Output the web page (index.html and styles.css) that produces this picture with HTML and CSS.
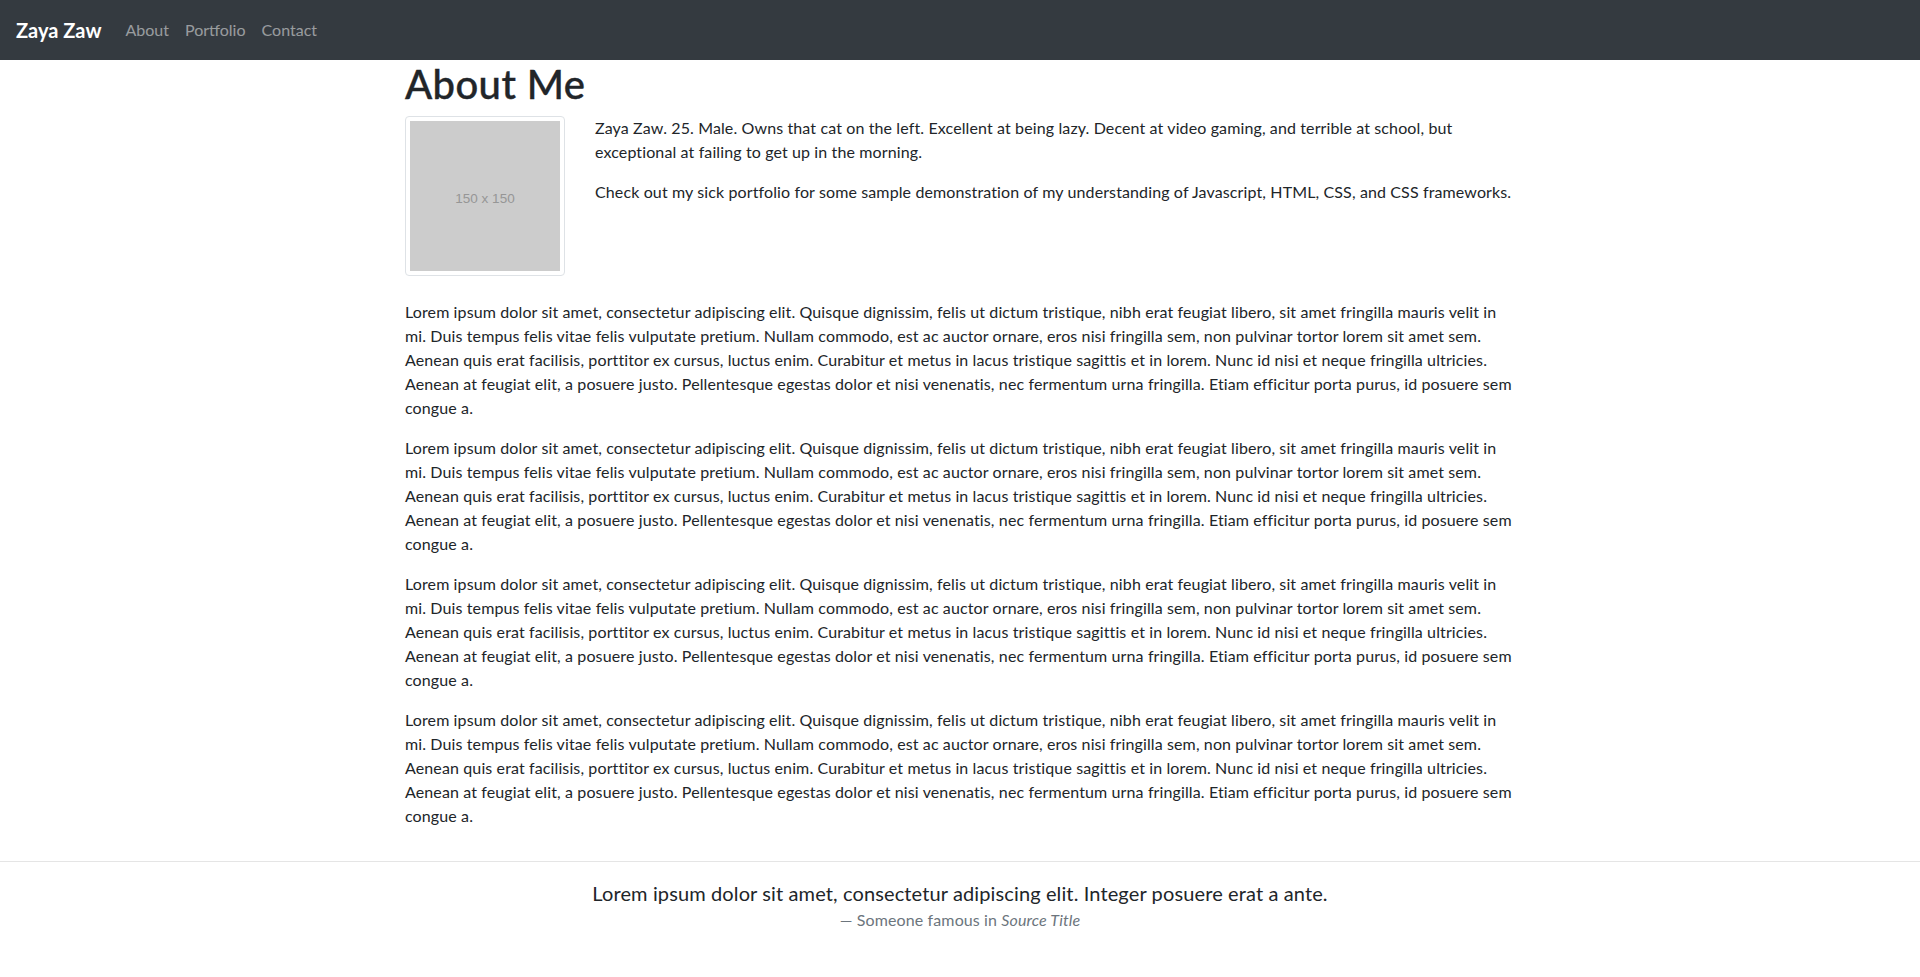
FILE: index.html
```html
<!DOCTYPE html>
<html lang="en">
<head>
<meta charset="utf-8">
<title>Zaya Zaw</title>
<link rel="stylesheet" href="styles.css">
</head>
<body>
<nav class="navbar">
  <a class="brand" href="#">Zaya Zaw</a>
  <ul class="nav-links">
    <li><a class="nav-link" href="#">About</a></li>
    <li><a class="nav-link" href="#">Portfolio</a></li>
    <li><a class="nav-link" href="#">Contact</a></li>
  </ul>
</nav>
<main class="container">
  <h1 class="title">About Me</h1>
  <div class="intro">
    <div class="thumb"><div class="placeholder">150 x 150</div></div>
    <div class="intro-text">
      <p>Zaya Zaw. 25. Male. Owns that cat on the left. Excellent at being lazy. Decent at video gaming, and terrible at school, but exceptional at failing to get up in the morning.</p>
      <p>Check out my sick portfolio for some sample demonstration of my understanding of Javascript, HTML, CSS, and CSS frameworks.</p>
    </div>
  </div>
  <p class="body-text">Lorem ipsum dolor sit amet, consectetur adipiscing elit. Quisque dignissim, felis ut dictum tristique, nibh erat feugiat libero, sit amet fringilla mauris velit in mi. Duis tempus felis vitae felis vulputate pretium. Nullam commodo, est ac auctor ornare, eros nisi fringilla sem, non pulvinar tortor lorem sit amet sem. Aenean quis erat facilisis, porttitor ex cursus, luctus enim. Curabitur et metus in lacus tristique sagittis et in lorem. Nunc id nisi et neque fringilla ultricies. Aenean at feugiat elit, a posuere justo. Pellentesque egestas dolor et nisi venenatis, nec fermentum urna fringilla. Etiam efficitur porta purus, id posuere sem congue a.</p>
  <p class="body-text">Lorem ipsum dolor sit amet, consectetur adipiscing elit. Quisque dignissim, felis ut dictum tristique, nibh erat feugiat libero, sit amet fringilla mauris velit in mi. Duis tempus felis vitae felis vulputate pretium. Nullam commodo, est ac auctor ornare, eros nisi fringilla sem, non pulvinar tortor lorem sit amet sem. Aenean quis erat facilisis, porttitor ex cursus, luctus enim. Curabitur et metus in lacus tristique sagittis et in lorem. Nunc id nisi et neque fringilla ultricies. Aenean at feugiat elit, a posuere justo. Pellentesque egestas dolor et nisi venenatis, nec fermentum urna fringilla. Etiam efficitur porta purus, id posuere sem congue a.</p>
  <p class="body-text">Lorem ipsum dolor sit amet, consectetur adipiscing elit. Quisque dignissim, felis ut dictum tristique, nibh erat feugiat libero, sit amet fringilla mauris velit in mi. Duis tempus felis vitae felis vulputate pretium. Nullam commodo, est ac auctor ornare, eros nisi fringilla sem, non pulvinar tortor lorem sit amet sem. Aenean quis erat facilisis, porttitor ex cursus, luctus enim. Curabitur et metus in lacus tristique sagittis et in lorem. Nunc id nisi et neque fringilla ultricies. Aenean at feugiat elit, a posuere justo. Pellentesque egestas dolor et nisi venenatis, nec fermentum urna fringilla. Etiam efficitur porta purus, id posuere sem congue a.</p>
  <p class="body-text">Lorem ipsum dolor sit amet, consectetur adipiscing elit. Quisque dignissim, felis ut dictum tristique, nibh erat feugiat libero, sit amet fringilla mauris velit in mi. Duis tempus felis vitae felis vulputate pretium. Nullam commodo, est ac auctor ornare, eros nisi fringilla sem, non pulvinar tortor lorem sit amet sem. Aenean quis erat facilisis, porttitor ex cursus, luctus enim. Curabitur et metus in lacus tristique sagittis et in lorem. Nunc id nisi et neque fringilla ultricies. Aenean at feugiat elit, a posuere justo. Pellentesque egestas dolor et nisi venenatis, nec fermentum urna fringilla. Etiam efficitur porta purus, id posuere sem congue a.</p>
</main>
<footer class="page-footer">
  <blockquote class="quote">
    <p class="quote-text">Lorem ipsum dolor sit amet, consectetur adipiscing elit. Integer posuere erat a ante.</p>
    <div class="quote-cite">— Someone famous in <cite class="source">Source Title</cite></div>
  </blockquote>
</footer>
</body>
</html>
```

FILE: styles.css
```css
* {
  box-sizing: border-box;
}

html, body {
  margin: 0;
  padding: 0;
  background: #fff;
}

body {
  font-family: Lato, "Open Sans", sans-serif;
  font-size: 16px;
  line-height: 24px;
  letter-spacing: 0.12px;
  color: #212529;
}

.navbar {
  display: flex;
  align-items: center;
  height: 60px;
  padding: 0 16px;
  background: #343a40;
}

.brand {
  margin-right: 16px;
  font-size: 20px;
  font-weight: 700;
  line-height: 30px;
  letter-spacing: 0;
  color: #fff;
  text-decoration: none;
}

.nav-links {
  display: flex;
  margin: 0;
  padding: 0;
  list-style: none;
}

.nav-link {
  display: block;
  padding: 0 8px;
  color: rgba(255, 255, 255, 0.5);
  text-decoration: none;
  line-height: 24px;
  letter-spacing: 0;
}

.container {
  width: 1140px;
  margin: 0 auto;
  padding: 0 15px;
}

.title {
  margin: 0 0 8px;
  font-size: 40px;
  font-weight: 500;
  line-height: 48px;
  letter-spacing: 0.4px;
  -webkit-text-stroke: 0.4px #212529;
}

.intro {
  display: flex;
  align-items: flex-start;
  gap: 30px;
  margin-bottom: 24px;
}

.thumb {
  flex: none;
  padding: 4px;
  border: 1px solid #dee2e6;
  border-radius: 4px;
  background: #fff;
}

.placeholder {
  display: flex;
  align-items: center;
  justify-content: center;
  width: 150px;
  height: 150px;
  padding-top: 5px;
  background: #ccc;
  color: #969696;
  font-family: "Liberation Sans", Arial, sans-serif;
  font-size: 13.5px;
  letter-spacing: 0;
}

.intro-text {
  flex: 1;
  min-width: 0;
}

.intro-text p,
.body-text {
  margin: 0 0 16px;
}

.page-footer {
  margin-top: 33px;
  padding-top: 16px;
  border-top: 1px solid #e5e5e5;
  text-align: center;
}

.quote {
  margin: 0;
}

.quote-text {
  margin: 0;
  font-size: 20px;
  line-height: 30px;
}

.quote-cite {
  font-size: 16px;
  line-height: 24px;
  color: #6c757d;
}

.source {
  font-style: italic;
}
```
